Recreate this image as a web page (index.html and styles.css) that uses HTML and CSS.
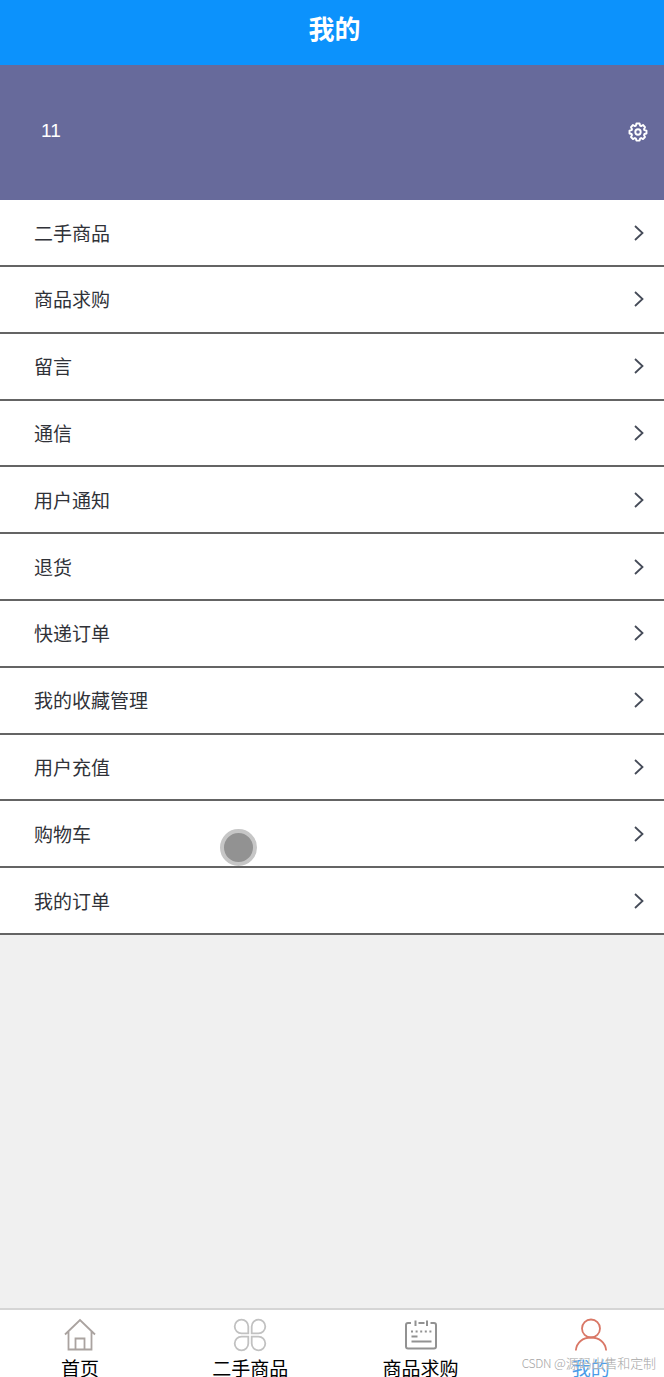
FILE: index.html
```html
<!DOCTYPE html>
<html lang="zh-CN">
<head>
    <meta charset="UTF-8">
    <meta name="viewport" content="width=device-width, initial-scale=1.0">
    <title>我的</title>
    <link rel="stylesheet" href="styles.css">
</head>
<body>
    <div class="page">
        <header class="navbar">我的</header>

        <div class="user">
            <span class="user-name">11</span>
            <svg class="setting" viewBox="0 0 20 20">
                <path d="M8.4 1.5h3.2l.5 2.1 1 .5 1.9-1.1 2 2.2-1 1.9.4 1.1 2.1.5v2.8l-2.1.5-.4 1.1 1 1.9-2 2.1-1.9-1.1-1 .5-.5 2.1H8.4l-.5-2.1-1-.5L5 17.1l-2-2.1 1-1.9-.4-1.1-2.1-.5V8.700l2.1-.5.4-1.1-1-1.900L5 3l1.900 1.100 1-.5z"/>
                <circle cx="10" cy="10" r="2.7"/>
            </svg>
        </div>

        <ul class="menu">
            <li>二手商品<svg class="arrow" viewBox="0 0 10 16"><path d="M1 1l7.5 7L1 15"/></svg></li>
            <li>商品求购<svg class="arrow" viewBox="0 0 10 16"><path d="M1 1l7.5 7L1 15"/></svg></li>
            <li>留言<svg class="arrow" viewBox="0 0 10 16"><path d="M1 1l7.5 7L1 15"/></svg></li>
            <li>通信<svg class="arrow" viewBox="0 0 10 16"><path d="M1 1l7.5 7L1 15"/></svg></li>
            <li>用户通知<svg class="arrow" viewBox="0 0 10 16"><path d="M1 1l7.5 7L1 15"/></svg></li>
            <li>退货<svg class="arrow" viewBox="0 0 10 16"><path d="M1 1l7.5 7L1 15"/></svg></li>
            <li>快递订单<svg class="arrow" viewBox="0 0 10 16"><path d="M1 1l7.5 7L1 15"/></svg></li>
            <li>我的收藏管理<svg class="arrow" viewBox="0 0 10 16"><path d="M1 1l7.5 7L1 15"/></svg></li>
            <li>用户充值<svg class="arrow" viewBox="0 0 10 16"><path d="M1 1l7.5 7L1 15"/></svg></li>
            <li>购物车<svg class="arrow" viewBox="0 0 10 16"><path d="M1 1l7.5 7L1 15"/></svg></li>
            <li>我的订单<svg class="arrow" viewBox="0 0 10 16"><path d="M1 1l7.5 7L1 15"/></svg></li>
        </ul>

        <nav class="tabbar">
            <div class="tab">
                <svg class="tab-icon home" viewBox="0 0 34 34">
                    <path d="M2 16.5L17 2l15 14.500M5.500 13.500v18h23v-18M12.500 31.500V20.500h9v11"/>
                </svg>
                <span>首页</span>
            </div>
            <div class="tab">
                <svg class="tab-icon goods" viewBox="0 0 34 34">
                    <path d="M15.300 15.300H8.500a6.800 6.800 0 1 1 6.800-6.800zM18.700 15.300V8.500a6.800 6.800 0 1 1 6.800 6.800zM15.300 18.700v6.800a6.800 6.800 0 1 1-6.800-6.800zM18.700 18.700h6.800a6.800 6.800 0 1 1-6.800 6.800z"/>
                </svg>
                <span>二手商品</span>
            </div>
            <div class="tab">
                <svg class="tab-icon buy" viewBox="0 0 34 34">
                    <path d="M7 5H4a2 2 0 0 0-2 2v21.500a2 2 0 0 0 2 2h26a2 2 0 0 0 2-2V7a2 2 0 0 0-2-2h-3.500M14.500 5h6M11.500 2.500v5.500M23 2.500v5.500M7.500 18.500h6M7.500 23.500h20"/>
                    <path class="dots" d="M7 13.500h21"/>
                </svg>
                <span>商品求购</span>
            </div>
            <div class="tab active">
                <svg class="tab-icon mine" viewBox="0 0 34 34">
                    <circle cx="17" cy="10.500" r="9"/>
                    <path d="M1.800 32.500c.8-8 7-13 15.200-13s14.400 5 15.200 13"/>
                </svg>
                <span>我的</span>
            </div>
        </nav>

        <div class="touch"></div>
        <div class="watermark"><span class="site">CSDN</span> @源码出售和定制</div>
    </div>
</body>
</html>
```
FILE: styles.css
```css
* {
    box-sizing: border-box;
}
body {
    margin: 0;
    background: #f0f0f0;
    color: #303238;
    font-family: "Liberation Sans", "Noto Sans CJK SC", sans-serif;
}
.page {
    position: relative;
    display: flex;
    flex-direction: column;
    height: 1377px;
    overflow: hidden;
}
.navbar {
    height: 65px;
    flex-shrink: 0;
    line-height: 60px;
    text-align: center;
    text-indent: 5px;
    font-size: 26px;
    font-weight: bold;
    color: #fff;
    background: #0c92fc;
}
.user {
    display: flex;
    align-items: center;
    justify-content: space-between;
    height: 134.5px;
    flex-shrink: 0;
    padding: 0 16px 0 41px;
    background: #676a9b;
}
.user-name {
    margin-bottom: 2px;
    font-size: 19px;
    color: #fff;
}
.setting {
    width: 20px;
    height: 20px;
    fill: none;
    stroke: #fff;
    stroke-width: 1.9;
    stroke-linejoin: round;
}
.menu {
    margin: 0;
    padding: 0.7px 0 0;
    list-style: none;
    background: #fff;
}
.menu li {
    display: flex;
    align-items: center;
    justify-content: space-between;
    height: 66.8px;
    padding: 0 20px 1px 34px;
    border-bottom: 2px solid #646464;
    font-size: 19px;
}
.arrow {
    width: 10px;
    height: 16px;
    margin-top: 1px;
    fill: none;
    stroke: #454b58;
    stroke-width: 1.8;
}
.tabbar {
    display: flex;
    height: 69px;
    flex-shrink: 0;
    margin: auto -12px 0 -5px;
    border-top: 2px solid #d5d5d5;
    background: #fff;
}
.tab {
    flex: 1;
    display: flex;
    flex-direction: column;
    align-items: center;
    padding-top: 8px;
    font-size: 19px;
    line-height: 36px;
    color: #000;
}
.tab-icon {
    width: 34px;
    height: 34px;
    flex-shrink: 0;
    fill: none;
    stroke-width: 1.8;
}
.home {
    stroke: #aaa3a0;
}
.goods {
    stroke: #c1c1c1;
}
.buy {
    stroke: #929292;
    stroke-width: 2;
}
.dots {
    stroke-dasharray: 2 2.6;
}
.mine {
    stroke: #d97766;
}
.active {
    color: #4a9ce8;
}
/* 点击时的圆点 */
.touch {
    position: absolute;
    left: 220px;
    top: 829px;
    width: 37px;
    height: 37px;
    border: 4px solid #c6c6c6;
    border-radius: 50%;
    background: #929292;
}
.watermark {
    position: absolute;
    right: 8px;
    bottom: 4px;
    font-family: "Noto Sans CJK SC", sans-serif;
    font-size: 13px;
    font-weight: 300;
    line-height: 20px;
    letter-spacing: -0.1px;
    white-space: nowrap;
    color: #a5a5a5;
    text-shadow: 0 0 1px #fff;
}
.site {
    font-size: 12px;
    letter-spacing: -0.3px;
}
```
